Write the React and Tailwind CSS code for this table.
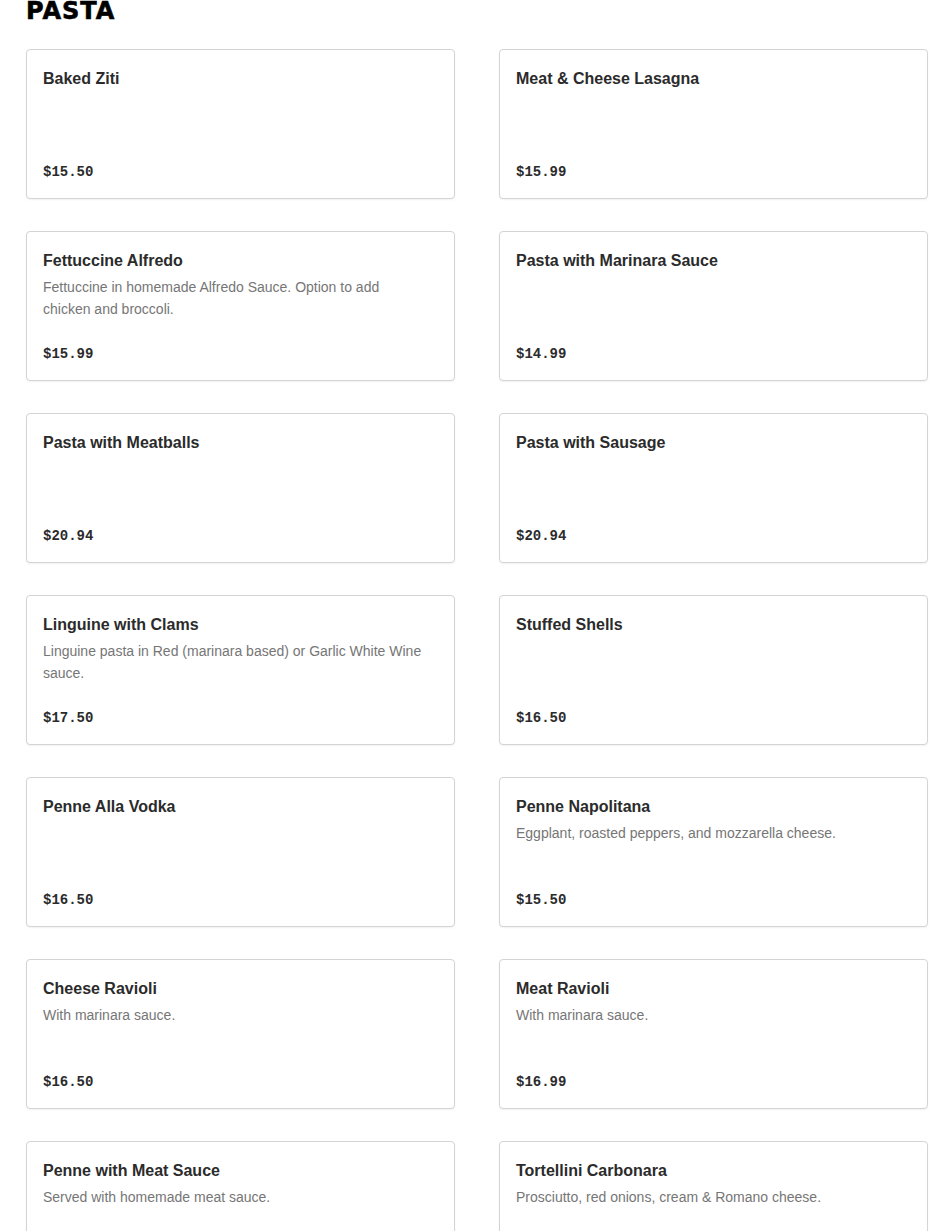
import React from 'react'

const items = [
  { name: 'Baked Ziti', price: '$15.50' },
  { name: 'Meat & Cheese Lasagna', price: '$15.99' },
  {
    name: 'Fettuccine Alfredo',
    desc: 'Fettuccine in homemade Alfredo Sauce. Option to add chicken and broccoli.',
    price: '$15.99'
  },
  { name: 'Pasta with Marinara Sauce', price: '$14.99' },
  { name: 'Pasta with Meatballs', price: '$20.94' },
  { name: 'Pasta with Sausage', price: '$20.94' },
  {
    name: 'Linguine with Clams',
    desc: 'Linguine pasta in Red (marinara based) or Garlic White Wine sauce.',
    price: '$17.50'
  },
  { name: 'Stuffed Shells', price: '$16.50' },
  { name: 'Penne Alla Vodka', price: '$16.50' },
  {
    name: 'Penne Napolitana',
    desc: 'Eggplant, roasted peppers, and mozzarella cheese.',
    price: '$15.50'
  },
  { name: 'Cheese Ravioli', desc: 'With marinara sauce.', price: '$16.50' },
  { name: 'Meat Ravioli', desc: 'With marinara sauce.', price: '$16.99' },
  { name: 'Penne with Meat Sauce', desc: 'Served with homemade meat sauce.', price: '$15.99' },
  {
    name: 'Tortellini Carbonara',
    desc: 'Prosciutto, red onions, cream & Romano cheese.',
    price: '$16.99'
  }
]

const MenuCard = ({ item }) => (
  <div className="flex flex-col h-[150px] bg-white border border-[#d4d4d4] rounded-[4px] shadow-[0_1px_2px_rgba(0,0,0,0.06)] px-4 pt-[17px] pb-[15px]">
    <h3 className="text-[16px] leading-6 font-bold text-[#2b2b2b]">{item.name}</h3>
    {item.desc && (
      <p className="mt-[3px] text-[14px] leading-[22px] text-[#767676] pr-2">{item.desc}</p>
    )}
    <div className="mt-auto font-['Liberation_Mono',monospace] font-bold text-[14px] leading-[22px] text-[#2b2b2b]">
      {item.price}
    </div>
  </div>
)

export default function App() {
  return (
    <div className="min-h-screen bg-white font-['Liberation_Sans',Arial,sans-serif] pl-[26px] pr-[22px]">
      <h2 className="-mt-[1px] font-['DejaVu_Sans',sans-serif] text-[24px] leading-none font-bold tracking-[1px] [-webkit-text-stroke:0.6px_black] text-black">
        PASTA
      </h2>
      <div className="mt-[26px] grid grid-cols-2 gap-x-[44px] gap-y-[32px]">
        {items.map((item) => (
          <MenuCard key={item.name} item={item} />
        ))}
      </div>
    </div>
  )
}
